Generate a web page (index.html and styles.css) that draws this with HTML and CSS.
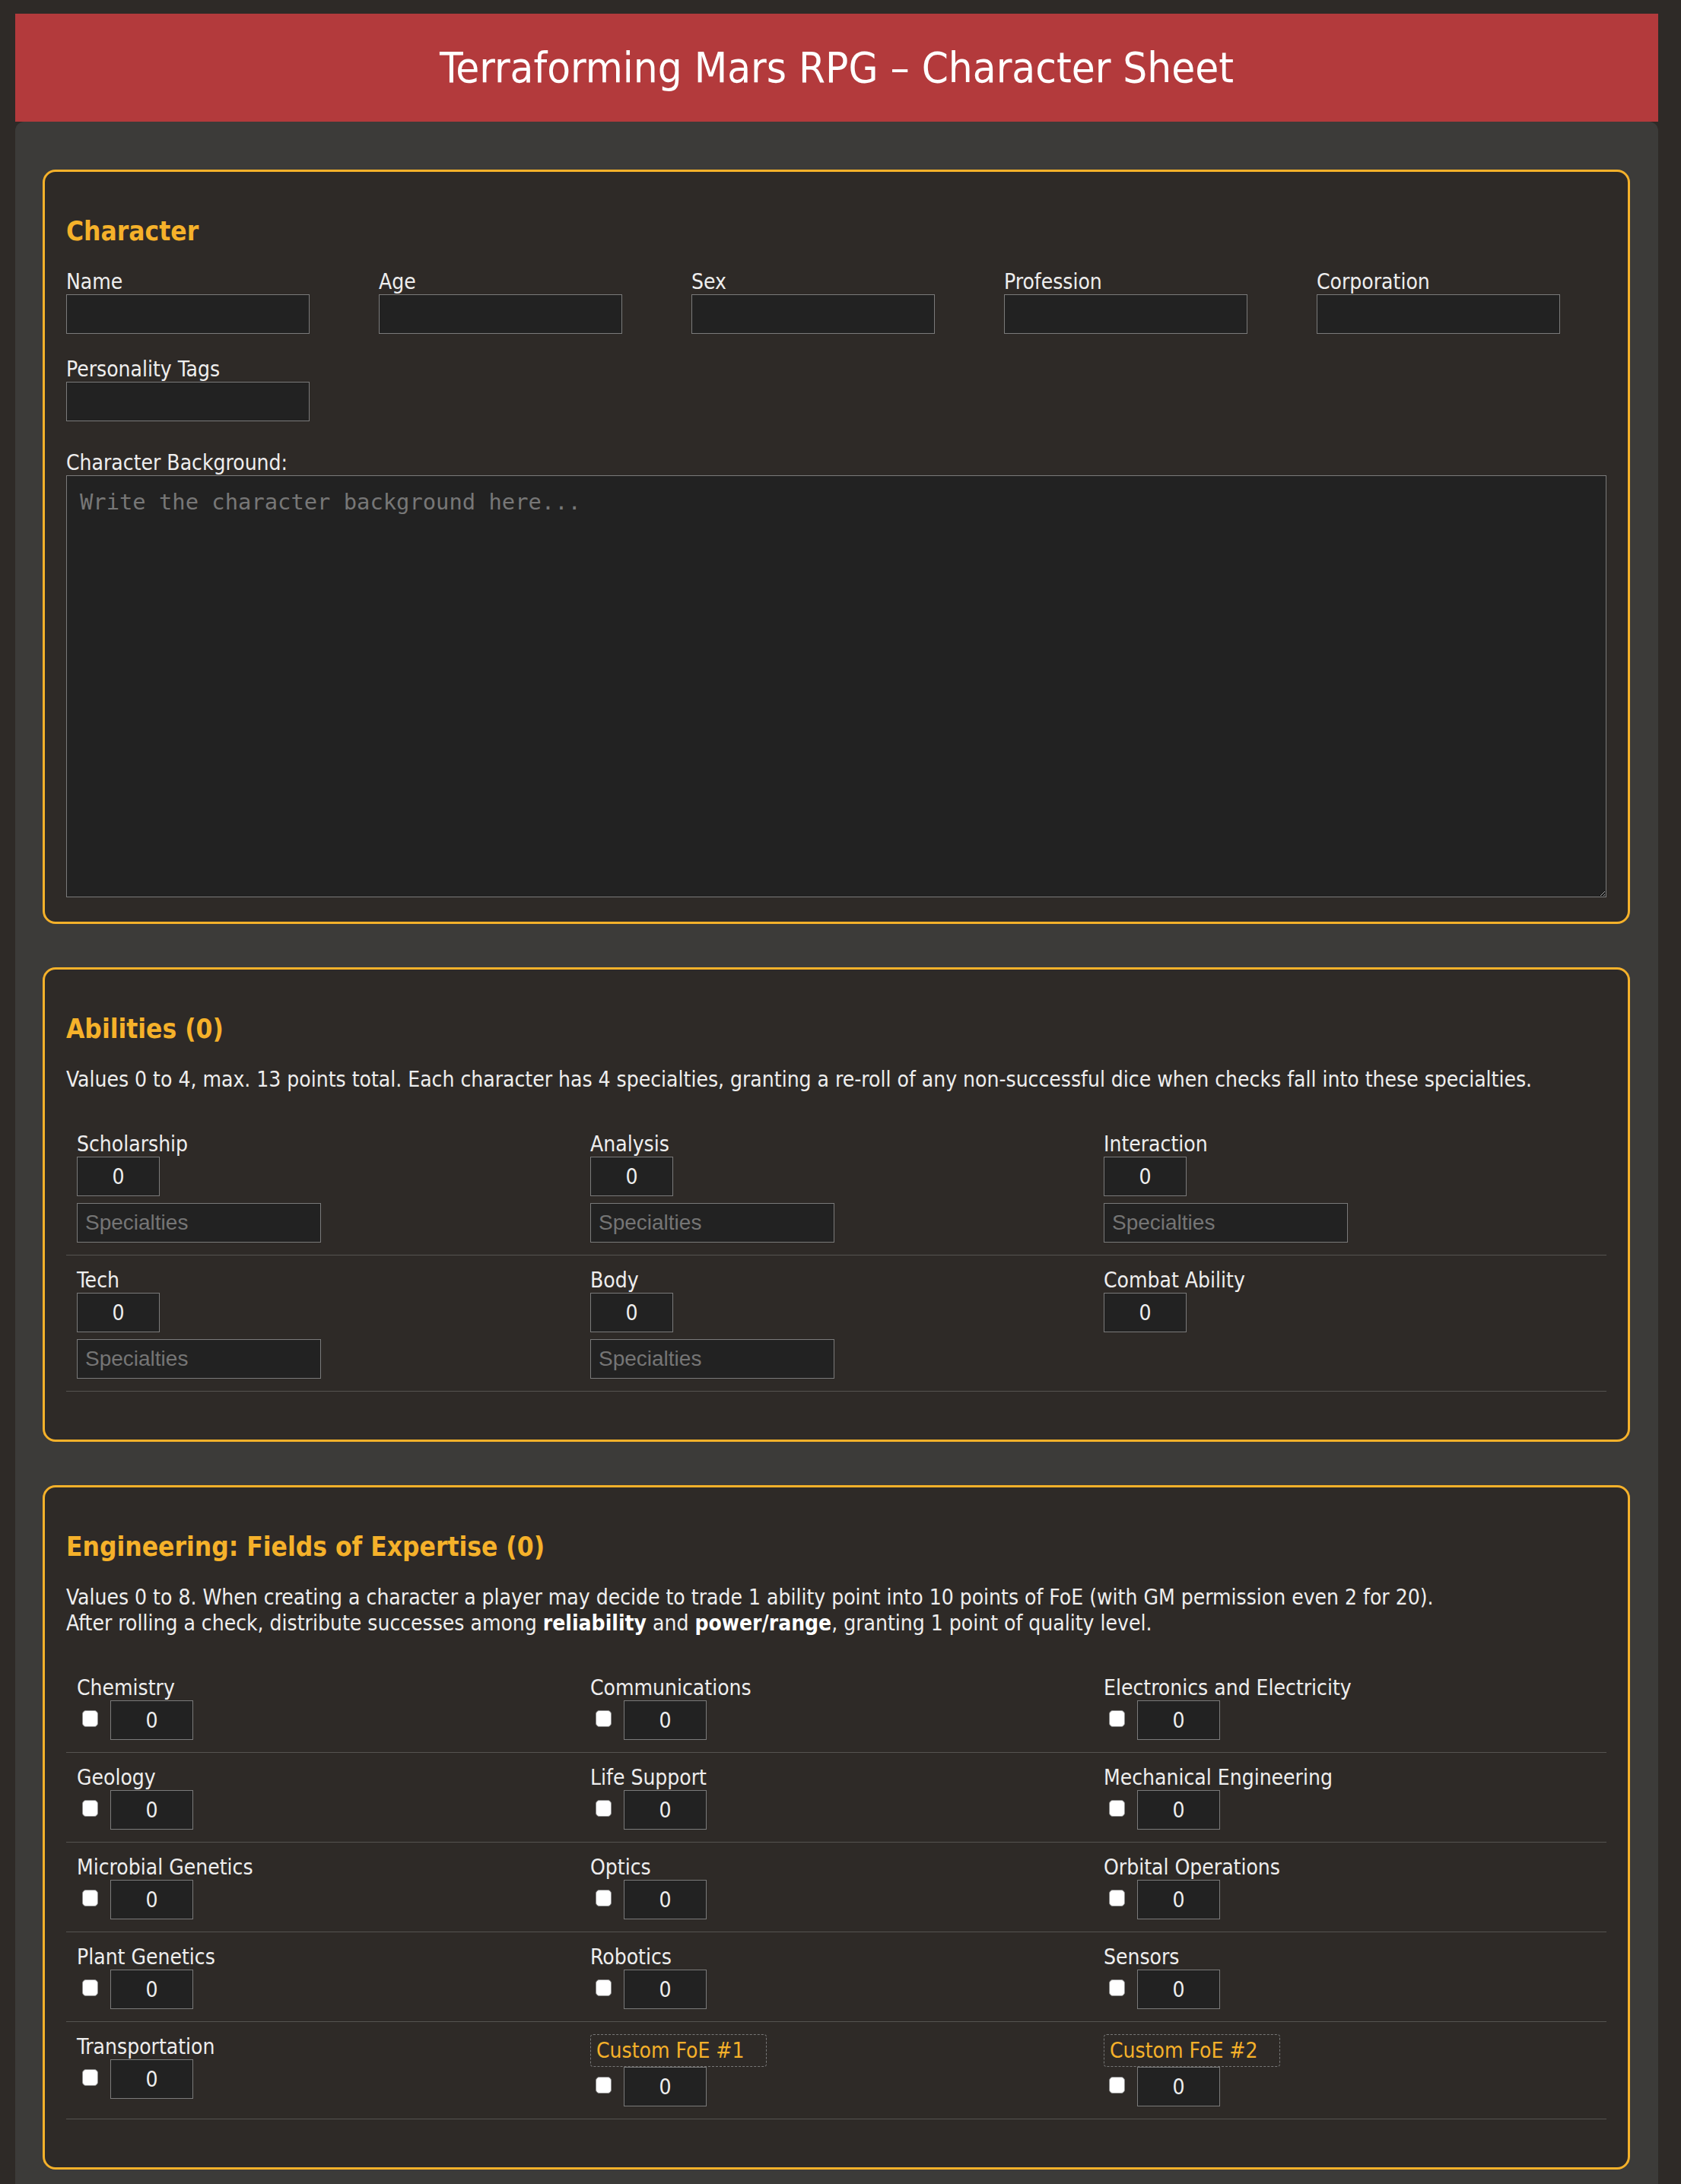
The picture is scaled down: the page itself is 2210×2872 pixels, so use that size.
FILE: index.html
```html
<!DOCTYPE html>
<html lang="en">
<head>
<meta charset="utf-8">
<title>Terraforming Mars RPG – Character Sheet</title>
<link rel="stylesheet" href="styles.css">
</head>
<body>
<header class="page-header">
  <h1 class="page-title">Terraforming Mars RPG – Character Sheet</h1>
</header>
<main class="sheet">
  <section class="card">
    <h2 class="card-title">Character</h2>
    <div class="field-grid">
      <div class="field"><label class="field-label">Name</label><input class="text-input" type="text"></div>
      <div class="field"><label class="field-label">Age</label><input class="text-input" type="text"></div>
      <div class="field"><label class="field-label">Sex</label><input class="text-input" type="text"></div>
      <div class="field"><label class="field-label">Profession</label><input class="text-input" type="text"></div>
      <div class="field"><label class="field-label">Corporation</label><input class="text-input" type="text"></div>
      <div class="field"><label class="field-label">Personality Tags</label><input class="text-input" type="text"></div>
    </div>
    <div class="background-block">
      <label class="field-label">Character Background:</label>
      <textarea class="background-text" placeholder="Write the character background here..."></textarea>
    </div>
  </section>

  <section class="card">
    <h2 class="card-title">Abilities (0)</h2>
    <p class="card-desc">Values 0 to 4, max. 13 points total. Each character has 4 specialties, granting a re-roll of any non-successful dice when checks fall into these specialties.</p>
    <div class="stat-grid">
      <div class="stat">
        <label class="field-label">Scholarship</label>
        <input class="num-input" type="number" value="0">
        <input class="spec-input" type="text" placeholder="Specialties">
      </div>
      <div class="stat">
        <label class="field-label">Analysis</label>
        <input class="num-input" type="number" value="0">
        <input class="spec-input" type="text" placeholder="Specialties">
      </div>
      <div class="stat">
        <label class="field-label">Interaction</label>
        <input class="num-input" type="number" value="0">
        <input class="spec-input" type="text" placeholder="Specialties">
      </div>
      <div class="stat">
        <label class="field-label">Tech</label>
        <input class="num-input" type="number" value="0">
        <input class="spec-input" type="text" placeholder="Specialties">
      </div>
      <div class="stat">
        <label class="field-label">Body</label>
        <input class="num-input" type="number" value="0">
        <input class="spec-input" type="text" placeholder="Specialties">
      </div>
      <div class="stat">
        <label class="field-label">Combat Ability</label>
        <input class="num-input" type="number" value="0">
      </div>
    </div>
  </section>

  <section class="card">
    <h2 class="card-title">Engineering: Fields of Expertise (0)</h2>
    <p class="card-desc">Values 0 to 8. When creating a character a player may decide to trade 1 ability point into 10 points of FoE (with GM permission even 2 for 20).<br>After rolling a check, distribute successes among <strong>reliability</strong> and <strong>power/range</strong>, granting 1 point of quality level.</p>
    <div class="stat-grid">
      <div class="stat"><label class="field-label">Chemistry</label><div class="foe-row"><input class="foe-check" type="checkbox"><input class="num-input" type="number" value="0"></div></div>
      <div class="stat"><label class="field-label">Communications</label><div class="foe-row"><input class="foe-check" type="checkbox"><input class="num-input" type="number" value="0"></div></div>
      <div class="stat"><label class="field-label">Electronics and Electricity</label><div class="foe-row"><input class="foe-check" type="checkbox"><input class="num-input" type="number" value="0"></div></div>
      <div class="stat"><label class="field-label">Geology</label><div class="foe-row"><input class="foe-check" type="checkbox"><input class="num-input" type="number" value="0"></div></div>
      <div class="stat"><label class="field-label">Life Support</label><div class="foe-row"><input class="foe-check" type="checkbox"><input class="num-input" type="number" value="0"></div></div>
      <div class="stat"><label class="field-label">Mechanical Engineering</label><div class="foe-row"><input class="foe-check" type="checkbox"><input class="num-input" type="number" value="0"></div></div>
      <div class="stat"><label class="field-label">Microbial Genetics</label><div class="foe-row"><input class="foe-check" type="checkbox"><input class="num-input" type="number" value="0"></div></div>
      <div class="stat"><label class="field-label">Optics</label><div class="foe-row"><input class="foe-check" type="checkbox"><input class="num-input" type="number" value="0"></div></div>
      <div class="stat"><label class="field-label">Orbital Operations</label><div class="foe-row"><input class="foe-check" type="checkbox"><input class="num-input" type="number" value="0"></div></div>
      <div class="stat"><label class="field-label">Plant Genetics</label><div class="foe-row"><input class="foe-check" type="checkbox"><input class="num-input" type="number" value="0"></div></div>
      <div class="stat"><label class="field-label">Robotics</label><div class="foe-row"><input class="foe-check" type="checkbox"><input class="num-input" type="number" value="0"></div></div>
      <div class="stat"><label class="field-label">Sensors</label><div class="foe-row"><input class="foe-check" type="checkbox"><input class="num-input" type="number" value="0"></div></div>
      <div class="stat"><label class="field-label">Transportation</label><div class="foe-row"><input class="foe-check" type="checkbox"><input class="num-input" type="number" value="0"></div></div>
      <div class="stat"><span class="custom-label" contenteditable="true">Custom FoE #1</span><div class="foe-row"><input class="foe-check" type="checkbox"><input class="num-input" type="number" value="0"></div></div>
      <div class="stat"><span class="custom-label" contenteditable="true">Custom FoE #2</span><div class="foe-row"><input class="foe-check" type="checkbox"><input class="num-input" type="number" value="0"></div></div>
    </div>
  </section>
</main>
</body>
</html>
```

FILE: styles.css
```css
html {
  background: #2e2a27;
}

body {
  margin: 18px 30px 0 20px;
  background: #2e2a27;
  color: #eeeeee;
  font-family: "DejaVu Sans Condensed", "DejaVu Sans", sans-serif;
  font-stretch: semi-condensed;
  font-size: 28px;
  line-height: 34px;
}

.page-header {
  height: 142px;
  background: #b33a3c;
  display: flex;
  align-items: center;
  justify-content: center;
}

.page-title {
  margin: 0;
  font-size: 56px;
  line-height: 66px;
  font-weight: normal;
  color: #ffffff;
}

.sheet {
  background: #3c3b39;
  border-radius: 12px;
  padding: 63px 37px 80px 36px;
}

.card {
  background: #2e2a27;
  border: 3px solid #f5b12a;
  border-radius: 17px;
  padding: 28px;
  margin-bottom: 57px;
}

.card-title {
  margin: 30px 0 29px;
  font-size: 35px;
  line-height: 41px;
  font-weight: bold;
  color: #f5b12a;
}

.card-desc {
  margin: 0 0 28px;
}

.card-desc strong {
  color: #ffffff;
}

.field-grid {
  display: grid;
  grid-template-columns: repeat(5, 1fr);
  gap: 30px 30px;
}

.field-label {
  display: block;
  line-height: 33px;
  color: #eeeeee;
}

.text-input {
  display: block;
  box-sizing: border-box;
  width: 320px;
  height: 52px;
  background: #222222;
  border: 1px solid #7a7a7a;
  color: #eeeeee;
  font: inherit;
  padding: 0 9px;
  margin: 0;
}

.background-block {
  margin-top: 38px;
  padding-bottom: 4px;
}

.background-text {
  display: block;
  box-sizing: border-box;
  width: 100%;
  height: 555px;
  margin: 0;
  padding: 17px;
  background: #222222;
  border: 1px solid #7a7a7a;
  color: #eeeeee;
  font-family: "DejaVu Sans Mono", monospace;
  font-size: 28.8px;
  line-height: 34px;
  resize: vertical;
}

.background-text::placeholder {
  color: #777777;
}

.stat-grid {
  display: grid;
  grid-template-columns: repeat(3, 1fr);
  margin: 35px 0 35px;
}

.stat {
  padding: 16px 14px;
  border-bottom: 1px solid #555350;
}

.num-input {
  display: block;
  box-sizing: border-box;
  width: 109px;
  height: 52px;
  margin: 0;
  padding: 0;
  background: #222222;
  border: 1px solid #7a7a7a;
  color: #eeeeee;
  font: inherit;
  text-align: center;
  -moz-appearance: textfield;
}

.num-input::-webkit-inner-spin-button,
.num-input::-webkit-outer-spin-button {
  -webkit-appearance: none;
  margin: 0;
}

.spec-input {
  display: block;
  box-sizing: border-box;
  width: 321px;
  height: 52px;
  margin: 9px 0 0;
  padding: 0 10px;
  background: #222222;
  border: 1px solid #7a7a7a;
  color: #eeeeee;
  font-family: "Liberation Sans", Arial, sans-serif;
  font-size: 28px;
}

.spec-input::placeholder {
  color: #757575;
}

.foe-row {
  display: flex;
  align-items: center;
}

.foe-check {
  -webkit-appearance: none;
  appearance: none;
  box-sizing: border-box;
  width: 21px;
  height: 22px;
  margin: 0 16px 5px 7px;
  flex: none;
  background: #ffffff;
  border: 1.5px solid #8c8c8c;
  border-radius: 5px;
}

.custom-label {
  display: block;
  box-sizing: border-box;
  width: 232px;
  height: 43px;
  padding: 4px 7px;
  border: 1px dashed #777777;
  border-radius: 4px;
  color: #f5b12a;
  line-height: 33px;
  outline: none;
}
```
